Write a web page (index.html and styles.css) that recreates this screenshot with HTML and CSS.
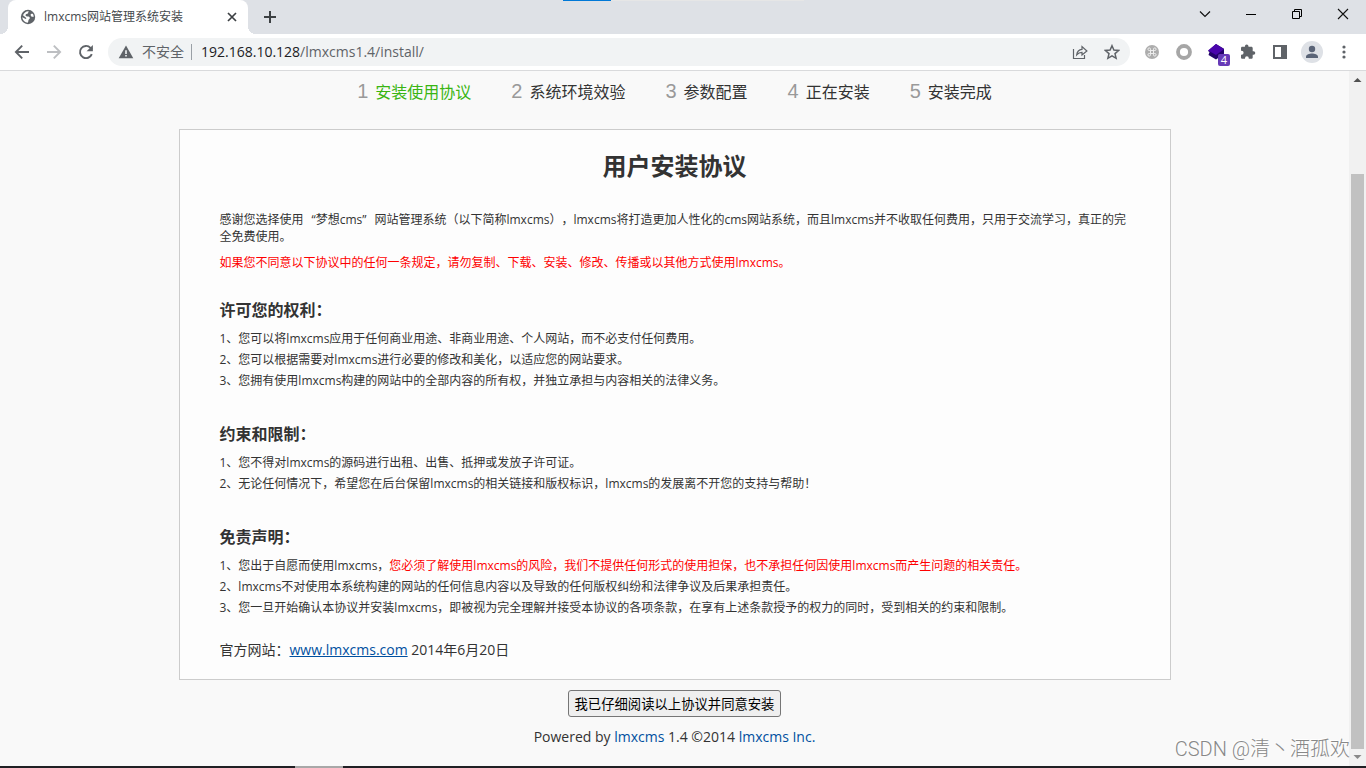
FILE: index.html
```html
<!DOCTYPE html>
<html lang="zh-CN">
<head>
<meta charset="utf-8">
<title>lmxcms网站管理系统安装</title>
<link rel="stylesheet" href="styles.css">
</head>
<body>
<div class="window">
  <header class="tabstrip">
    <div class="progress"></div>
    <div class="tab">
      <svg class="icon16" viewBox="0 0 16 16"><circle cx="8" cy="8" r="7.2" fill="#5f6368"/><path d="M9 2.300C7.600 2.600 8.800 4 7.800 4.600c-.8.400-2 .4-2.200 1.400-.2 1 .6 1.500 1.800 1.400 1.300-.1 2.200.3 2.400 1.400.2 1-.9 1.300-1.300 2.300-.2.900-.2 1.900-.7 2.700A5.800 5.800 0 0 1 2.300 8.200l2.900 1.600c.9.400 1.500-.4.800-1.100L3 6.200C3.900 3.800 6.200 2 9 2.300z" fill="#fff"/><path d="M10.800 5.200c.8-.5 1.700-.5 2.300 0l.7 2.300c-.9.400-2.300.3-2.800-.6-.3-.6-.6-1.300-.2-1.700z" fill="#fff"/></svg>
      <span class="tab-title">lmxcms网站管理系统安装</span>
      <button class="plain" aria-label="关闭标签页"><svg class="icon16" viewBox="0 0 16 16"><path d="M4 4l8 8M12 4l-8 8" stroke="#3c4043" stroke-width="1.700" fill="none"/></svg></button>
    </div>
    <button class="plain new-tab" aria-label="新标签页"><svg class="icon16" viewBox="0 0 16 16"><path d="M8 2v12M2 8h12" stroke="#3c4043" stroke-width="2" fill="none"/></svg></button>
    <div class="window-controls">
      <button class="plain" aria-label="搜索标签页"><svg class="icon16" viewBox="0 0 16 16"><path d="M3 5.500l5 5 5-5" stroke="#111" stroke-width="1.200" fill="none"/></svg></button>
      <button class="plain" aria-label="最小化"><svg class="icon16" viewBox="0 0 16 16"><path d="M3 8.500h10" stroke="#000" fill="none"/></svg></button>
      <button class="plain" aria-label="还原"><svg class="icon16" viewBox="0 0 16 16"><path d="M3.500 5.500h7v7h-7zM5.500 5V3.500h7v7H11" stroke="#000" fill="none"/></svg></button>
      <button class="plain" aria-label="关闭"><svg class="icon16" viewBox="0 0 16 16"><path d="M3 3l10 10M13 3L3 13" stroke="#111" stroke-width="1.100" fill="none"/></svg></button>
    </div>
  </header>
  <nav class="toolbar" aria-label="浏览器工具栏">
    <div class="nav-buttons">
      <button class="plain" aria-label="后退"><svg class="icon16" viewBox="0 0 16 16"><path d="M15 8H2M8.200 1.700L1.900 8l6.300 6.300" stroke="#5f6368" stroke-width="1.900" fill="none"/></svg></button>
      <button class="plain" aria-label="前进"><svg class="icon16" viewBox="0 0 16 16"><path d="M1 8h13M7.800 1.700L14.100 8l-6.300 6.300" stroke="#bdbfc2" stroke-width="1.900" fill="none"/></svg></button>
      <button class="plain" aria-label="刷新"><svg class="icon16" viewBox="0 0 16 16"><path d="M13.800 10.200A6.100 6.100 0 1 1 12.500 3.800L14 5.200" stroke="#5f6368" stroke-width="1.900" fill="none"/><path d="M14.900 1v6.300H8.600z" fill="#5f6368"/></svg></button>
    </div>
    <div class="omnibox">
      <svg class="icon16" viewBox="0 0 16 16"><path d="M8 1.500L15.300 14.300H.7z" fill="#5f6368"/><path d="M7.200 6.300h1.600v3.600H7.200zM7.200 11h1.600v1.600H7.200z" fill="#f1f3f4"/></svg>
      <span class="insecure">不安全</span>
      <span class="divider"></span>
      <span class="url"><span class="host">192.168.10.128</span>/lmxcms1.4/install/</span>
      <button class="plain share" aria-label="分享"><svg class="icon16" viewBox="0 0 16 16"><path d="M1.500 5v9.500h11V11M4.700 10.900c.4-3.500 2.400-5.300 5.300-5.500V2.600L14.900 7 10 11V8.400c-2.200 0-3.800.7-5.300 2.500z" stroke="#5f6368" stroke-width="1.200" fill="none"/></svg></button>
      <button class="plain" aria-label="收藏"><svg class="icon16" viewBox="0 0 16 16"><path d="M8 1.700l1.900 4.400 4.700.4-3.600 3.100 1.100 4.700L8 11.800l-4.100 2.500L5 9.600 1.400 6.500l4.700-.4z" stroke="#5f6368" stroke-width="1.500" fill="none"/></svg></button>
    </div>
    <div class="extensions">
      <button class="plain" aria-label="扩展一"><svg class="icon16" viewBox="0 0 16 16"><circle cx="8" cy="8" r="7" fill="#adadad"/><path d="M6.500 6.500h3v3h-3zM6.500 6.500H5.200a1.300 1.300 0 1 1 1.300-1.300zM9.500 6.500V5.200a1.300 1.300 0 1 1 1.300 1.300zM9.500 9.500h1.300a1.300 1.300 0 1 1-1.300 1.300zM6.500 9.500v1.300a1.300 1.300 0 1 1-1.300-1.300z" stroke="#f4f4f4" stroke-width=".9" fill="none"/></svg></button>
      <button class="plain" aria-label="扩展二"><svg class="icon16" viewBox="0 0 16 16"><circle cx="8" cy="8" r="6" stroke="#a6a6a6" stroke-width="3.800" fill="none"/></svg></button>
      <button class="plain badge-host" aria-label="扩展三"><svg class="icon16" viewBox="0 0 16 16"><path d="M8 0l8 4.800v5L8 15.500 .5 11l1-3-1.500-1z" fill="#24046b"/><path d="M8 0l8 5.200L8 11 0 6.500z" fill="#4a05ac"/></svg><span class="badge">4</span></button>
      <button class="plain" aria-label="扩展程序"><svg class="icon16" viewBox="0 0 16 16"><path d="M13.600 7.300h-.9V4.200c0-.8-.6-1.400-1.400-1.400H8.500V2.400a1.800 1.800 0 0 0-3.600 0v.4H2.300C1.500 2.800 1 3.400 1 4.200v2.500h.6a2 2 0 0 1 0 4H1v2.700c0 .8.600 1.400 1.400 1.400H5v-.6a1.900 1.900 0 0 1 3.800 0v.6h2.500c.8 0 1.400-.6 1.400-1.400v-2.700h.9a1.700 1.700 0 0 0 0-3.400z" fill="#5f6368"/></svg></button>
      <button class="plain" aria-label="侧边栏"><svg class="icon16" viewBox="0 0 16 16"><path d="M1 1h14v14H1zM3 3v10h6V3z" fill="#5f6368" fill-rule="evenodd"/></svg></button>
      <button class="plain avatar" aria-label="用户"><svg class="icon16" viewBox="0 0 16 16"><circle cx="8" cy="5" r="3.200" fill="#5a6477"/><path d="M2 14v-1.500C2 10.500 5.500 9.400 8 9.400s6 1.100 6 3.100V14z" fill="#5a6477"/></svg></button>
      <button class="plain" aria-label="菜单"><svg class="icon16" viewBox="0 0 16 16"><circle cx="8" cy="3" r="1.600" fill="#5f6368"/><circle cx="8" cy="8" r="1.600" fill="#5f6368"/><circle cx="8" cy="13" r="1.600" fill="#5f6368"/></svg></button>
    </div>
  </nav>
  <div class="viewport">
    <main class="page">
      <ol class="steps">
        <li class="step current"><span class="number">1</span>安装使用协议</li>
        <li class="step"><span class="number">2</span>系统环境效验</li>
        <li class="step"><span class="number">3</span>参数配置</li>
        <li class="step"><span class="number">4</span>正在安装</li>
        <li class="step"><span class="number">5</span>安装完成</li>
      </ol>
      <article class="agreement">
        <h1>用户安装协议</h1>
        <p class="intro">感谢您选择使用<span class="quoted">“梦想cms”</span>网站管理系统（以下简称lmxcms），lmxcms将打造更加人性化的cms网站系统，而且lmxcms并不收取任何费用，只用于交流学习，真正的完全免费使用。</p>
        <p class="intro warning">如果您不同意以下协议中的任何一条规定，请勿复制、下载、安装、修改、传播或以其他方式使用lmxcms。</p>
        <section>
          <h2>许可您的权利：</h2>
          <p>1、您可以将lmxcms应用于任何商业用途、非商业用途、个人网站，而不必支付任何费用。</p>
          <p>2、您可以根据需要对lmxcms进行必要的修改和美化，以适应您的网站要求。</p>
          <p>3、您拥有使用lmxcms构建的网站中的全部内容的所有权，并独立承担与内容相关的法律义务。</p>
        </section>
        <section>
          <h2>约束和限制：</h2>
          <p>1、您不得对lmxcms的源码进行出租、出售、抵押或发放子许可证。</p>
          <p>2、无论任何情况下，希望您在后台保留lmxcms的相关链接和版权标识，lmxcms的发展离不开您的支持与帮助！</p>
        </section>
        <section>
          <h2>免责声明：</h2>
          <p>1、您出于自愿而使用lmxcms，<span class="warning">您必须了解使用lmxcms的风险，我们不提供任何形式的使用担保，也不承担任何因使用lmxcms而产生问题的相关责任。</span></p>
          <p>2、lmxcms不对使用本系统构建的网站的任何信息内容以及导致的任何版权纠纷和法律争议及后果承担责任。</p>
          <p>3、您一旦开始确认本协议并安装lmxcms，即被视为完全理解并接受本协议的各项条款，在享有上述条款授予的权力的同时，受到相关的约束和限制。</p>
        </section>
        <p class="site">官方网站：<a href="#">www.lmxcms.com</a> 2014年6月20日</p>
      </article>
      <button class="agree">我已仔细阅读以上协议并同意安装</button>
      <footer class="powered">Powered by <a href="#">lmxcms</a> 1.4 ©2014 <a href="#">lmxcms Inc.</a></footer>
    </main>
    <div class="scrollbar">
      <svg class="arrow" viewBox="0 0 17 17"><path d="M4.500 11h8l-4-4z" fill="#505050"/></svg>
      <div class="track"><div class="thumb"></div></div>
      <svg class="arrow" viewBox="0 0 17 17"><path d="M4.500 6h8l-4 4z" fill="#888"/></svg>
    </div>
    <div class="watermark">CSDN @清丶酒孤欢</div>
  </div>
  <div class="taskbar"><div class="task"></div></div>
</div>
</body>
</html>
```
FILE: styles.css
```css
* { box-sizing: border-box; }

body {
  margin: 0;
  color: #333;
  font-family: "Open Sans", "Noto Sans CJK SC", sans-serif;
  font-size: 12px;
  line-height: 16px;
  text-spacing-trim: space-all;
}

h1, h2, p, ol { margin: 0; padding: 0; }

.window {
  display: flex;
  flex-direction: column;
  height: 100vh;
  overflow: hidden;
}

.plain {
  display: flex;
  padding: 0;
  border: 0;
  background: none;
  font: inherit;
}

.icon16 { display: block; flex: none; width: 16px; height: 16px; }

/* Tab strip */
.tabstrip {
  position: relative;
  display: flex;
  flex: none;
  align-items: center;
  height: 34px;
  padding-left: 8px;
  background: #dee1e6;
}

.progress {
  position: absolute;
  top: 0;
  left: 563px;
  width: 241px;
  height: 1px;
  background: linear-gradient(to right, #0078d7 48px, #e6e6e6 48px);
}

.tab {
  position: relative;
  display: flex;
  align-items: center;
  gap: 8px;
  width: 240px;
  height: 34px;
  padding: 0 8px 0 12px;
  border-radius: 8px 8px 0 0;
  background: #fff;
}

.tab::before,
.tab::after {
  content: "";
  position: absolute;
  bottom: 0;
  width: 8px;
  height: 8px;
}

.tab::before { right: 100%; background: radial-gradient(circle at 0 0, transparent 8px, #fff 8px); }
.tab::after { left: 100%; background: radial-gradient(circle at 100% 0, transparent 8px, #fff 8px); }

.tab-title { flex: 1; color: #45494d; }

.new-tab { margin-left: 14px; }

.window-controls {
  display: flex;
  gap: 30px;
  margin: 0 15px 6px auto;
}

/* Toolbar */
.toolbar {
  display: flex;
  flex: none;
  align-items: center;
  height: 37px;
  padding: 0 14px;
  border-bottom: 1px solid #d9dadc;
  background: #fff;
}

.nav-buttons { display: flex; gap: 16px; }

.omnibox {
  display: flex;
  flex: 1;
  align-items: center;
  height: 28px;
  margin: 0 14px;
  padding: 0 10px;
  border-radius: 14px;
  background: #f1f3f4;
  color: #5f6368;
  font-size: 14px;
}

.insecure { margin-left: 8px; }
.divider { width: 1px; height: 16px; margin: 0 9px 0 7px; background: #9aa0a6; }
.url { flex: 1; }
.host { color: #202124; }
.share { margin-right: 16px; }

.extensions { display: flex; align-items: center; gap: 16px; }

.badge-host { position: relative; }

.badge {
  position: absolute;
  top: 10px;
  left: 10px;
  width: 12px;
  height: 12px;
  border-radius: 2px;
  background: #673ab7;
  color: #fff;
  font-size: 11px;
  line-height: 12px;
  text-align: center;
}

.avatar {
  padding: 3px;
  margin: 0 -3px;
  border-radius: 50%;
  background: #dee1e6;
}

/* Page area */
.viewport {
  position: relative;
  display: flex;
  flex: 1;
  min-height: 0;
}

.page {
  display: flex;
  flex: 1;
  flex-direction: column;
  align-items: center;
  overflow: hidden;
  background: #f9f9f9;
}

.steps {
  display: flex;
  gap: 40px;
  margin: 8px 0 25px;
  list-style: none;
}

.step {
  display: flex;
  align-items: baseline;
  gap: 7px;
  font-size: 16px;
  line-height: 24px;
}

.number {
  color: #999;
  font-family: "Liberation Sans", Arial, sans-serif;
  font-size: 20px;
}

.current { color: #39b513; }

.agreement {
  width: calc(100% - 32px);
  max-width: 992px;
  padding: 19px 40px;
  border: 1px solid #ccc;
  background: #fdfdfd;
}

h1 {
  margin-bottom: 28px;
  font-size: 24px;
  line-height: 34px;
  text-align: center;
}

.intro { margin-bottom: 9px; line-height: 17px; }

.quoted { margin: 0 8px; }

.warning { color: #f00; }

section { margin-top: 33px; }

.intro + section { margin-top: 27px; }

h2 {
  margin-bottom: 9px;
  font-size: 16px;
  line-height: 24px;
}

section p { margin-bottom: 5px; }

.site { margin-top: 24px; font-size: 14px; line-height: 20px; }

a { color: #0050a0; }

.agree {
  height: 27px;
  margin: 10px 0;
  padding: 0 6px;
  border: 1px solid #767676;
  border-radius: 3px;
  background: #efefef;
  color: #000;
  font-family: inherit;
}

.powered { font-size: 14px; line-height: 20px; }
.powered a { text-decoration: none; }

.scrollbar {
  display: flex;
  flex: none;
  flex-direction: column;
  width: 17px;
  background: #f1f1f1;
}

.arrow { flex: none; width: 17px; height: 17px; }

.track { display: flex; flex: 1; flex-direction: column; justify-content: flex-end; padding: 0 2px; }

.thumb { height: 87%; background: #c1c1c1; }

.watermark {
  position: absolute;
  right: 16px;
  bottom: 3px;
  color: #888;
  font-family: Roboto, "Noto Sans CJK SC", sans-serif;
  font-size: 20px;
  font-weight: 300;
  line-height: 28px;
  text-shadow: -1px -1px 0 #fff;
}

.taskbar { flex: none; height: 2px; padding-left: 295px; background: #202024; }
.task { width: 48px; height: 2px; background: #a8a8a8; }
```
